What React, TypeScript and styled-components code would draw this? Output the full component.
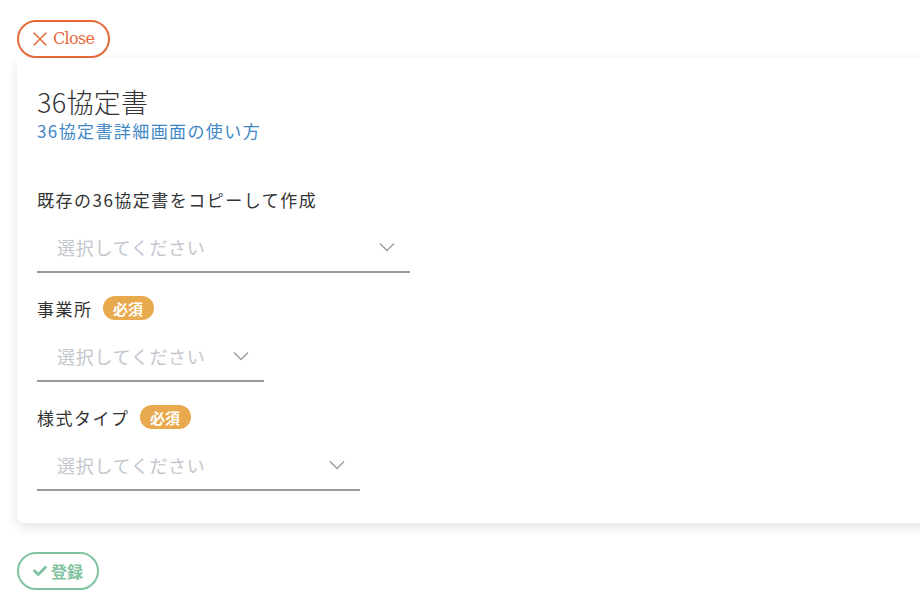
import React from 'react';
import styled, { createGlobalStyle } from 'styled-components';
import { FaCheck } from 'react-icons/fa';

const GlobalStyle = createGlobalStyle`
  html, body {
    margin: 0;
    background: #fff;
    overflow: hidden;
  }
  body {
    font-family: "Noto Sans CJK JP", "Noto Sans", sans-serif;
    color: #333;
  }
`;

const Page = styled.div`
  padding: 20px 0 0 17px;
  width: 960px;
`;

const PillButton = styled.button<{ $tone: string }>`
  display: inline-flex;
  align-items: center;
  gap: 4px;
  height: 38px;
  padding: 0 14px;
  border: 2px solid ${({ $tone }) => $tone};
  border-radius: 19px;
  background: #fff;
  color: ${({ $tone }) => $tone};
  cursor: pointer;
`;

const CloseButton = styled(PillButton)`
  gap: 6px;
  padding: 0 14px;
`;

const CloseLabel = styled.span`
  font: 16px/1 "DejaVu Serif", "Liberation Serif", serif;
  letter-spacing: -0.7px;
`;

const SubmitLabel = styled.span`
  font: bold 16px/1 "Noto Sans CJK JP", sans-serif;
`;

const Card = styled.section`
  width: 920px;
  padding: 28px 20px 32px;
  background: #fff;
  border-radius: 0 0 8px 8px;
  box-shadow: 0 4px 12px rgba(0, 0, 0, 0.11);
  box-sizing: border-box;
`;

const Title = styled.h1`
  margin: 0;
  font: 300 27px/32px "Noto Sans CJK JP", sans-serif;
  letter-spacing: 0.3px;
  color: #333;
`;

const HelpLink = styled.a`
  display: block;
  font-size: 17px;
  line-height: 26px;
  letter-spacing: 1.4px;
  color: #3f87c5;
  text-decoration: none;
`;

const Field = styled.div<{ $first?: boolean }>`
  margin-top: ${({ $first }) => ($first ? '43px' : '23px')};
`;

const LabelRow = styled.div`
  display: flex;
  align-items: center;
  gap: 10px;
  height: 24px;
  font-size: 17px;
  letter-spacing: 1.5px;
  color: #333;
`;

const Badge = styled.span`
  display: inline-flex;
  align-items: center;
  justify-content: center;
  width: 51px;
  height: 24px;
  border-radius: 12px;
  background: #e9a94f;
  color: #fff;
  font-size: 15px;
  font-weight: bold;
  letter-spacing: 0;
`;

const Select = styled.div<{ $width: number }>`
  display: flex;
  align-items: center;
  justify-content: space-between;
  width: ${({ $width }) => $width}px;
  height: 50px;
  margin-top: 12px;
  padding: 0 15px 0 20px;
  border-bottom: 2px solid #9a9a9a;
  box-sizing: border-box;
`;

const Placeholder = styled.span`
  font-size: 18px;
  letter-spacing: 0.7px;
  color: #c3c6cc;
`;

const Footer = styled.div`
  margin-top: 29px;
`;

const CloseIcon = () => (
  <svg width="14" height="14" viewBox="0 0 14 14" fill="none">
    <path d="M1 1L13 13M13 1L1 13" stroke="currentColor" strokeWidth="1.5" strokeLinecap="round" />
  </svg>
);

const Chevron = () => (
  <svg width="16" height="10" viewBox="0 0 16 10" fill="none">
    <polyline points="1,1.5 8,8.5 15,1.5" stroke="#999" strokeWidth="1.3" />
  </svg>
);

const fields = [
  { label: '既存の36協定書をコピーして作成', width: 373, required: false },
  { label: '事業所', width: 227, required: true },
  { label: '様式タイプ', width: 323, required: true },
];

export default function App() {
  return (
    <Page>
      <GlobalStyle />
      <CloseButton $tone="#e5693b">
        <CloseIcon />
        <CloseLabel>Close</CloseLabel>
      </CloseButton>
      <Card>
        <Title>36協定書</Title>
        <HelpLink href="#">36協定書詳細画面の使い方</HelpLink>
        {fields.map(({ label, width, required }, i) => (
          <Field key={label} $first={i === 0}>
            <LabelRow>
              {label}
              {required ? <Badge>必須</Badge> : null}
            </LabelRow>
            <Select $width={width}>
              <Placeholder>選択してください</Placeholder>
              <Chevron />
            </Select>
          </Field>
        ))}
      </Card>
      <Footer>
        <PillButton $tone="#7fc4a0">
          <FaCheck size={14} />
          <SubmitLabel>登録</SubmitLabel>
        </PillButton>
      </Footer>
    </Page>
  );
}
